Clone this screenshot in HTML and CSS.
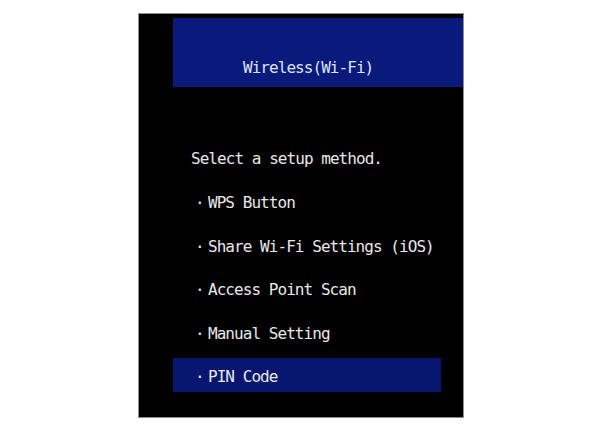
FILE: index.html
```html
<!DOCTYPE html>
<html lang="en">

<head>
    <meta charset="utf-8">
    <meta name="viewport" content="width=device-width, initial-scale=1.0">
    <title>Wireless(Wi-Fi)</title>

    <link rel="stylesheet" href="styles.css">
</head>

<body>

    <section class="screen">
        <header class="titlebar">
            <h1>Wireless(Wi-Fi)</h1>
        </header>

        <p class="prompt">Select a setup method.</p>

        <ul class="menu">
            <li><span class="dot">·</span>WPS Button</li>
            <li><span class="dot">·</span>Share Wi-Fi Settings (iOS)</li>
            <li><span class="dot">·</span>Access Point Scan</li>
            <li><span class="dot">·</span>Manual Setting</li>
            <li class="valgt"><span class="dot">·</span>PIN Code</li>
        </ul>
    </section>

</body></html>
```

FILE: styles.css
```css
body {
    margin: 0;
    background-color: #ffffff;
    font-family: "DejaVu Sans Mono", "Liberation Mono", monospace;
}

.screen {
    box-sizing: border-box;
    width: 326px;
    height: 405px;
    margin: 13px 0 0 138px;
    background-color: #000000;
    border: 1px solid #8e8e8e;
    color: #e8e8e8;
    font-size: 16px;
    letter-spacing: -0.95px;
}

.titlebar {
    height: 69px;
    margin: 4px 0 0 34px;
    background-color: #091a7c;
}

h1 {
    margin: 0;
    padding: 40px 0 0 70px;
    font-size: 16px;
    font-weight: normal;
    line-height: 20px;
    color: #dde2ee;
}

.prompt {
    margin: 55px 0 0 52px;
    height: 34px;
    line-height: 34px;
}

.menu {
    list-style: none;
    margin: 8px 0 0 34px;
    padding: 0;
    width: 268px;
    display: flex;
    flex-direction: column;
    gap: 9.5px;
}

.menu li {
    height: 32px;
    padding: 2px 0 0 22px;
    line-height: 34px;
    white-space: nowrap;
}

.dot {
    display: inline-block;
    width: 13px;
}

.valgt {
    background-color: #07166f;
}
```
